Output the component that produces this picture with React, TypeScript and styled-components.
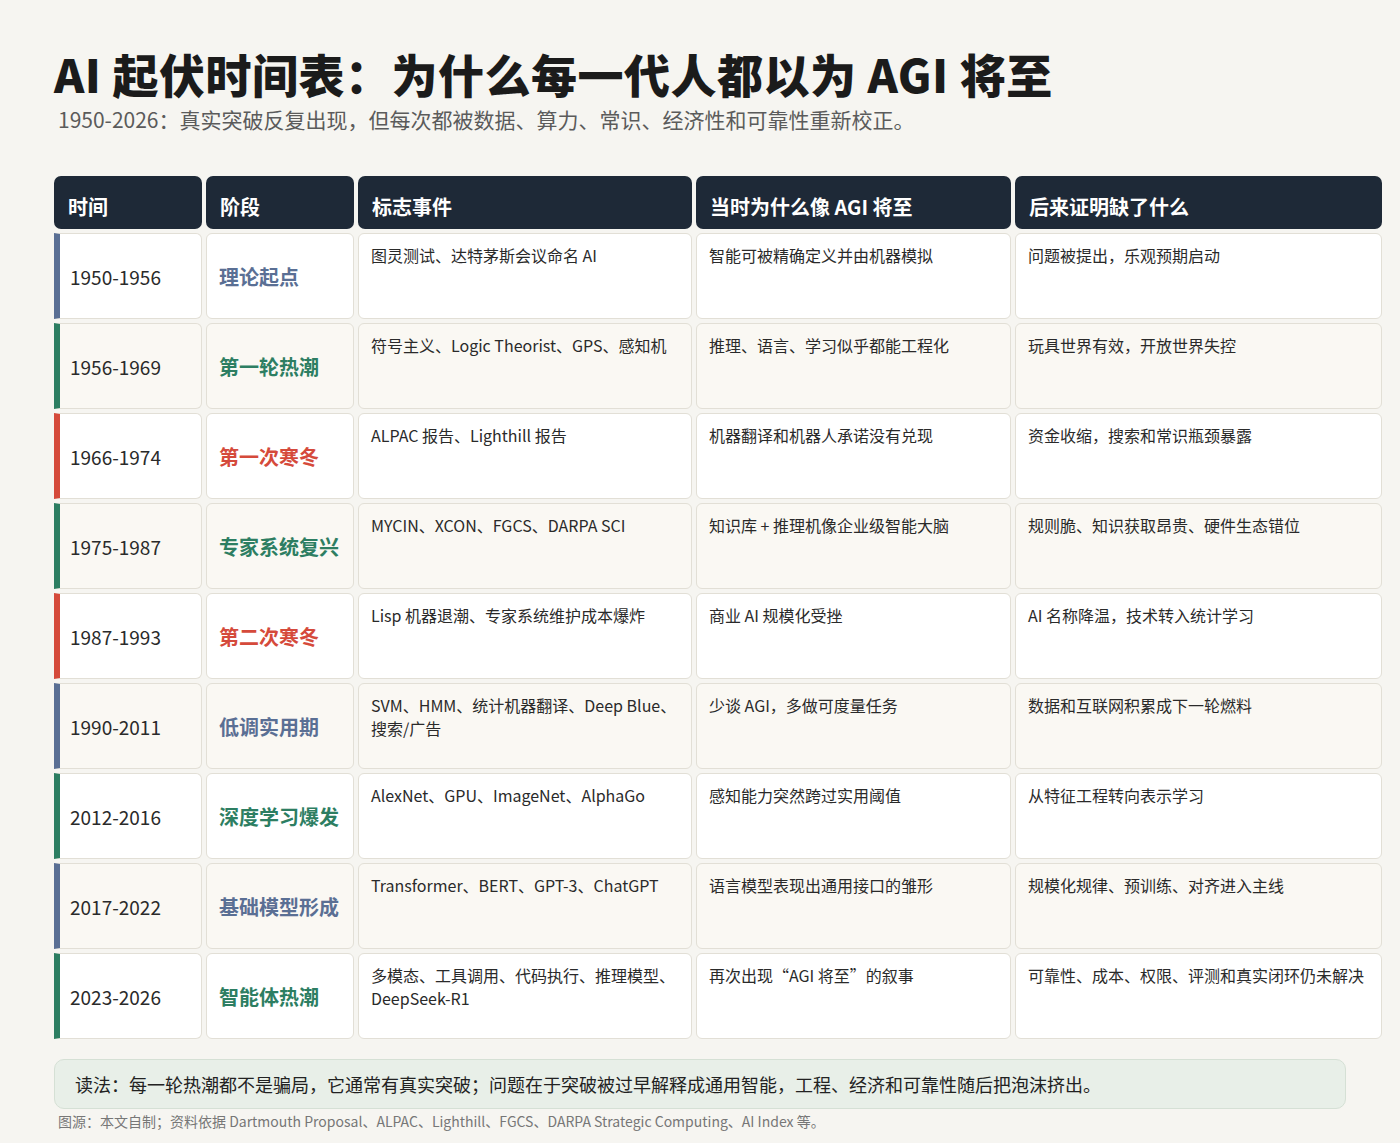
import React from "react";
import styled, { createGlobalStyle } from "styled-components";

const Global = createGlobalStyle`
  body {
    margin: 0;
    background: #f6f5f1;
    font-family: "Noto Sans CJK SC", "Noto Sans", sans-serif;
    color: #222;
  }
`;

const Page = styled.div`
  width: 1400px;
  height: 1143px;
  padding: 42px 0 0 54px;
  box-sizing: border-box;
`;

const Title = styled.h1`
  margin: 0;
  font-size: 46px;
  line-height: 62px;
  font-weight: 900;
  color: #1b1b1b;
  letter-spacing: 0.5px;
`;

const Subtitle = styled.p`
  margin: 0 0 0 4px;
  font-size: 21px;
  line-height: 30px;
  color: #5b5b5b;
`;

const Grid = styled.div`
  margin-top: 42px;
  display: grid;
  grid-template-columns: 148px 148px 334px 315px 367px;
  grid-auto-rows: 86px;
  grid-template-rows: 53px;
  gap: 4px;
`;

const Head = styled.div`
  background: #1e2937;
  color: #fff;
  border-radius: 7px;
  font-size: 20px;
  font-weight: 700;
  display: flex;
  align-items: flex-end;
  padding: 0 14px 8px;
`;

const Cell = styled.div<{ $alt: boolean; $accent?: string }>`
  background: ${(p) => (p.$alt ? "#faf8f3" : "#fff")};
  border: 1px solid #e2dfd6;
  border-radius: 6px;
  box-sizing: border-box;
  padding: 10px 12px;
  font-size: 16px;
  line-height: 23px;
  color: #2a2a2a;
  ${(p) =>
    p.$accent
      ? `border-left: 6px solid ${p.$accent}; border-radius: 0 6px 6px 0;`
      : ""}
`;

const TimeCell = styled(Cell)`
  display: flex;
  align-items: center;
  font-size: 19px;
  padding-left: 10px;
`;

const StageCell = styled(Cell)<{ $color: string }>`
  display: flex;
  align-items: center;
  font-size: 20px;
  font-weight: 700;
  color: ${(p) => p.$color};
`;

const Note = styled.div`
  margin-top: 20px;
  width: 1292px;
  height: 50px;
  box-sizing: border-box;
  background: #e8efe8;
  border: 1px solid #d5e0d5;
  border-radius: 10px;
  padding: 0 20px;
  display: flex;
  align-items: center;
  font-size: 18px;
  color: #222;
`;

const Source = styled.div`
  margin: 2px 0 0 4px;
  font-size: 14px;
  color: #777;
`;

const B = "#5a6f94", G = "#2d7e62", R = "#d54a3b";

const rows = [
  ["1950-1956", "理论起点", B, "图灵测试、达特茅斯会议命名 AI", "智能可被精确定义并由机器模拟", "问题被提出，乐观预期启动"],
  ["1956-1969", "第一轮热潮", G, "符号主义、Logic Theorist、GPS、感知机", "推理、语言、学习似乎都能工程化", "玩具世界有效，开放世界失控"],
  ["1966-1974", "第一次寒冬", R, "ALPAC 报告、Lighthill 报告", "机器翻译和机器人承诺没有兑现", "资金收缩，搜索和常识瓶颈暴露"],
  ["1975-1987", "专家系统复兴", G, "MYCIN、XCON、FGCS、DARPA SCI", "知识库 + 推理机像企业级智能大脑", "规则脆、知识获取昂贵、硬件生态错位"],
  ["1987-1993", "第二次寒冬", R, "Lisp 机器退潮、专家系统维护成本爆炸", "商业 AI 规模化受挫", "AI 名称降温，技术转入统计学习"],
  ["1990-2011", "低调实用期", B, "SVM、HMM、统计机器翻译、Deep Blue、搜索/广告", "少谈 AGI，多做可度量任务", "数据和互联网积累成下一轮燃料"],
  ["2012-2016", "深度学习爆发", G, "AlexNet、GPU、ImageNet、AlphaGo", "感知能力突然跨过实用阈值", "从特征工程转向表示学习"],
  ["2017-2022", "基础模型形成", B, "Transformer、BERT、GPT-3、ChatGPT", "语言模型表现出通用接口的雏形", "规模化规律、预训练、对齐进入主线"],
  ["2023-2026", "智能体热潮", G, "多模态、工具调用、代码执行、推理模型、DeepSeek-R1", "再次出现“AGI 将至”的叙事", "可靠性、成本、权限、评测和真实闭环仍未解决"],
];

export default function App() {
  return (
    <Page>
      <Global />
      <Title>AI 起伏时间表：为什么每一代人都以为 AGI 将至</Title>
      <Subtitle>1950-2026：真实突破反复出现，但每次都被数据、算力、常识、经济性和可靠性重新校正。</Subtitle>
      <Grid>
        {["时间", "阶段", "标志事件", "当时为什么像 AGI 将至", "后来证明缺了什么"].map((h) => (
          <Head key={h}>{h}</Head>
        ))}
        {rows.map((r, i) => {
          const alt = i % 2 === 1;
          return (
            <React.Fragment key={r[0]}>
              <TimeCell $alt={alt} $accent={r[2]}>{r[0]}</TimeCell>
              <StageCell $alt={alt} $color={r[2]}>{r[1]}</StageCell>
              <Cell $alt={alt}>{r[3]}</Cell>
              <Cell $alt={alt}>{r[4]}</Cell>
              <Cell $alt={alt}>{r[5]}</Cell>
            </React.Fragment>
          );
        })}
      </Grid>
      <Note>读法：每一轮热潮都不是骗局，它通常有真实突破；问题在于突破被过早解释成通用智能，工程、经济和可靠性随后把泡沫挤出。</Note>
      <Source>图源：本文自制；资料依据 Dartmouth Proposal、ALPAC、Lighthill、FGCS、DARPA Strategic Computing、AI Index 等。</Source>
    </Page>
  );
}
